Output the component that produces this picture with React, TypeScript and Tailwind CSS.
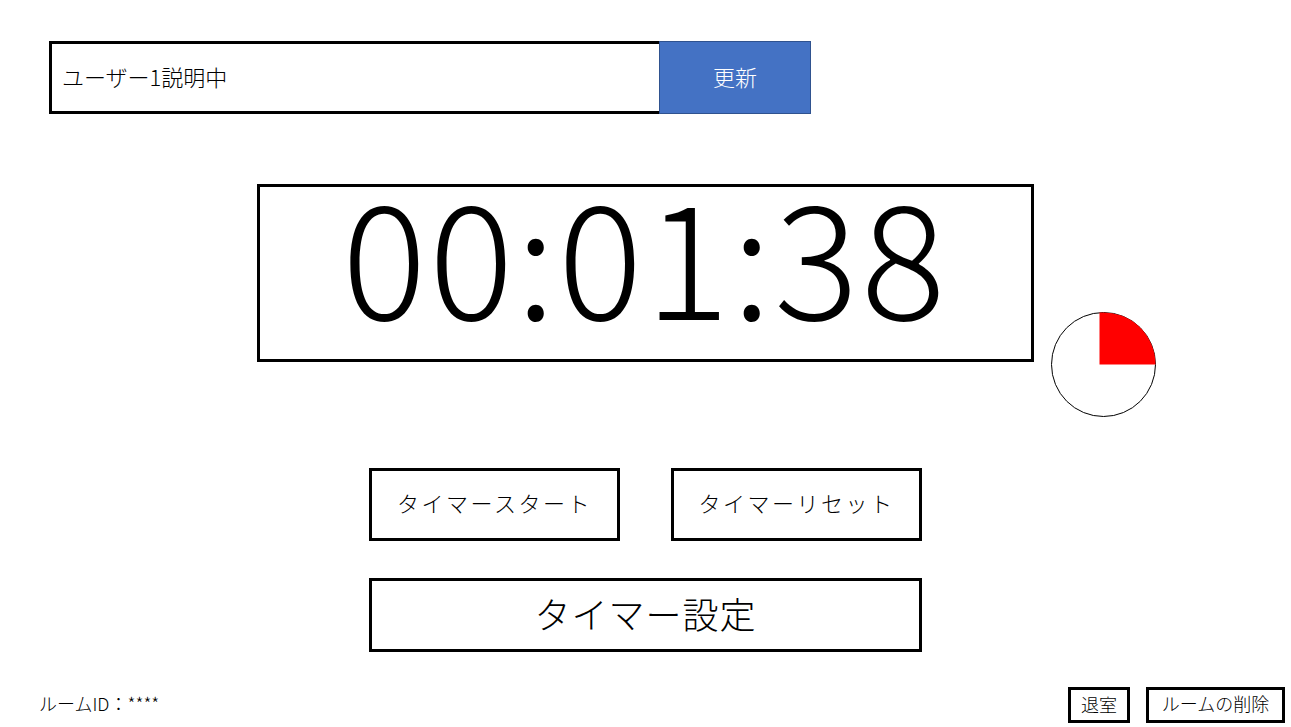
import React from "react";

const font = { fontFamily: '"Noto Sans CJK JP", "Noto Sans", sans-serif' };

export default function App() {
  return (
    <div className="w-[1291px] h-[727px] bg-white text-black relative overflow-hidden" style={font}>
      <div className="flex flex-col">
        {/* top bar */}
        <div className="ml-[49px] mt-[41px] flex w-[762px] h-[73px]">
          <div className="flex-1 border-[3px] border-r-0 border-black flex items-center pl-[10px] pb-[3px] text-[22px] font-light">
            ユーザー1説明中
          </div>
          <div className="w-[152px] bg-[#4472c4] border border-[#2f528f] flex items-center justify-center pb-[3px] text-white text-[22px] font-light">
            更新
          </div>
        </div>

        {/* timer */}
        <div className="mt-[70px] flex justify-center">
          <div className="relative -ml-[1px]">
            <div className="w-[777px] h-[178px] border-[3px] border-black flex items-center justify-center">
              <span className="text-[158px] leading-none font-light tracking-[2.5px] -mt-[42px]">00:01:38</span>
            </div>
            <svg className="absolute left-[793px] top-[127px]" width="107" height="107" viewBox="0 0 107 107">
              <circle cx="53.5" cy="53.5" r="52" fill="white" stroke="black" strokeWidth="1" />
              <path d="M49.5 53.5 L49.5 1.6 A52 52 0 0 1 105.5 53.5 Z" fill="#ff0000" />
            </svg>
          </div>
        </div>

        {/* buttons */}
        <div className="mt-[106px] flex justify-center gap-[51px]">
          <div className="w-[251px] h-[73px] border-[3px] border-black flex items-center justify-center pb-[4px] text-[22px] font-light tracking-[2.5px]">
            タイマースタート
          </div>
          <div className="w-[251px] h-[73px] border-[3px] border-black flex items-center justify-center pb-[4px] text-[22px] font-light tracking-[2.5px]">
            タイマーリセット
          </div>
        </div>

        <div className="mt-[37px] flex justify-center">
          <div className="w-[553px] h-[74px] border-[3px] border-black flex items-center justify-center pb-[4px] text-[36px] font-light tracking-[1px]">
            タイマー設定
          </div>
        </div>

        {/* bottom */}
        <div className="mt-[35px] flex items-center pl-[39px] pr-[6px]">
          <div className="text-[18px] font-light -mt-[4px]">ルームID：****</div>
          <div className="ml-auto flex items-center gap-[16px]">
            <div className="w-[62px] h-[36px] border-[3px] border-black flex items-center justify-center pb-[2px] text-[18px] font-light">
              退室
            </div>
            <div className="w-[139px] h-[36px] border-[3px] border-black flex items-center justify-center pb-[3px] text-[18px] font-light -mt-[1px]">
              ルームの削除
            </div>
          </div>
        </div>
      </div>
    </div>
  );
}
